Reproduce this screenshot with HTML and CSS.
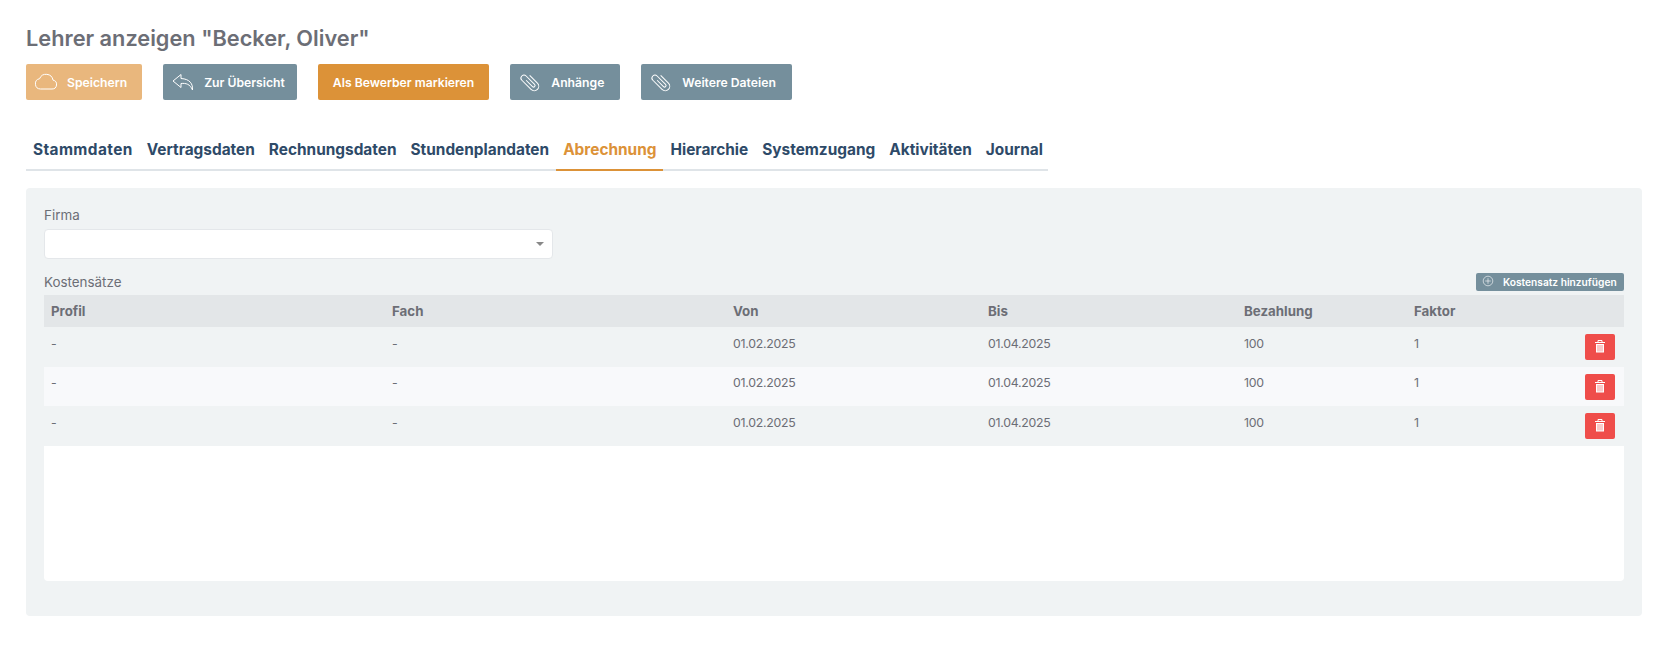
FILE: index.html
```html
<!DOCTYPE html>
<html lang="de">

<head>
    <meta charset="utf-8">
    <title>Lehrer anzeigen</title>
    <link rel="stylesheet" href="styles.css">
</head>

<body>
    <h1 class="page_title">Lehrer anzeigen "Becker, Oliver"</h1>

    <div class="actions">
        <button class="btn btn_light">
            <svg class="btn_icon" viewBox="0 0 24 24"><path d="M6.5 19h11.5a4.5 4.5 0 0 0 1-8.900 7 7 0 0 0-13.400-1.400 5.200 5.200 0 0 0 .9 10.300z" /></svg>
            Speichern
        </button>
        <button class="btn btn_slate btn_back">
            <svg class="btn_icon" viewBox="0 0 24 24"><path d="M10 4.500 2 11l8 6.500v-4c5-.5 9 .5 11.500 6.500.5-6-2.500-11-11.500-11.500z" /></svg>
            Zur Übersicht
        </button>
        <button class="btn btn_orange btn_text">Als Bewerber markieren</button>
        <button class="btn btn_slate">
            <svg class="btn_icon" viewBox="0 0 24 24"><path transform="rotate(-45 12 12)" d="M10.500 8v9a1.500 1.500 0 0 0 3 0V5a3 3 0 0 0-6 0v13a4.500 4.500 0 0 0 9 0V7" /></svg>
            Anhänge
        </button>
        <button class="btn btn_slate">
            <svg class="btn_icon" viewBox="0 0 24 24"><path transform="rotate(-45 12 12)" d="M10.500 8v9a1.500 1.500 0 0 0 3 0V5a3 3 0 0 0-6 0v13a4.500 4.500 0 0 0 9 0V7" /></svg>
            Weitere Dateien
        </button>
    </div>

    <ul class="tabs">
        <li>Stammdaten</li>
        <li>Vertragsdaten</li>
        <li>Rechnungsdaten</li>
        <li>Stundenplandaten</li>
        <li class="active">Abrechnung</li>
        <li>Hierarchie</li>
        <li>Systemzugang</li>
        <li>Aktivitäten</li>
        <li>Journal</li>
    </ul>

    <div class="panel">
        <label class="field_label">Firma</label>
        <div class="select"><span class="select_arrow"></span></div>

        <div class="table_head">
            <span class="field_label">Kostensätze</span>
            <button class="btn_add">
                <svg class="add_icon" viewBox="0 0 12 12"><circle cx="6" cy="6" r="4.800" /><path d="M6 3.200v5.600M3.200 6h5.600" /></svg>
                Kostensatz hinzufügen
            </button>
        </div>

        <div class="table_wrap">
            <table class="rates">
                <colgroup>
                    <col class="col_profil">
                    <col class="col_fach">
                    <col class="col_von">
                    <col class="col_bis">
                    <col class="col_pay">
                    <col>
                </colgroup>
                <thead>
                    <tr>
                        <th>Profil</th>
                        <th>Fach</th>
                        <th>Von</th>
                        <th>Bis</th>
                        <th>Bezahlung</th>
                        <th>Faktor</th>
                    </tr>
                </thead>
                <tbody>
                    <tr>
                        <td>-</td>
                        <td>-</td>
                        <td>01.02.2025</td>
                        <td>01.04.2025</td>
                        <td>100</td>
                        <td class="cell_last">1
                            <button class="btn_del"><svg viewBox="0 0 12 14"><path class="lid" d="M1 3.500h10M4 3.500V1.500h4v2" /><path class="bin" d="M2 5h8v8.500H2z" /><path class="slots" d="M4 6v6.500M6 6v6.500M8 6v6.500" /></svg></button>
                        </td>
                    </tr>
                    <tr>
                        <td>-</td>
                        <td>-</td>
                        <td>01.02.2025</td>
                        <td>01.04.2025</td>
                        <td>100</td>
                        <td class="cell_last">1
                            <button class="btn_del"><svg viewBox="0 0 12 14"><path class="lid" d="M1 3.500h10M4 3.500V1.500h4v2" /><path class="bin" d="M2 5h8v8.500H2z" /><path class="slots" d="M4 6v6.500M6 6v6.500M8 6v6.500" /></svg></button>
                        </td>
                    </tr>
                    <tr>
                        <td>-</td>
                        <td>-</td>
                        <td>01.02.2025</td>
                        <td>01.04.2025</td>
                        <td>100</td>
                        <td class="cell_last">1
                            <button class="btn_del"><svg viewBox="0 0 12 14"><path class="lid" d="M1 3.500h10M4 3.500V1.500h4v2" /><path class="bin" d="M2 5h8v8.500H2z" /><path class="slots" d="M4 6v6.500M6 6v6.500M8 6v6.500" /></svg></button>
                        </td>
                    </tr>
                </tbody>
            </table>
        </div>
    </div>
</body>

</html>
```

FILE: styles.css
```css
* {
    padding: 0;
    margin: 0;
    box-sizing: border-box;
}

body {
    background: #fff;
    color: #6c6e76;
    font-family: "Inter", "Liberation Sans", sans-serif;
    font-size: 13px;
    padding: 24px 24px 0 26px;
}

.page_title {
    font-size: 21.750px;
    font-weight: 600;
    line-height: 28px;
    color: #6c6e76;
}

.actions {
    display: flex;
    gap: 21px;
    margin-top: 12px;
}

.btn {
    display: flex;
    align-items: center;
    height: 36px;
    border: none;
    border-radius: 2px;
    color: #fff;
    font-family: inherit;
    font-size: 12.200px;
    font-weight: 600;
    padding: 0 16px 0 8px;
}

.btn_text {
    padding: 0 15px;
}

.btn_light {
    padding-right: 15px;
}

.btn_back {
    padding-right: 12px;
}

.btn_light {
    background: #e9b77d;
}

.btn_slate {
    background: #758f9c;
}

.btn_orange {
    background: #dc9238;
}

.btn_icon {
    width: 24px;
    height: 24px;
    margin-right: 9px;
    fill: none;
    stroke: #fff;
    stroke-width: 1;
}

.tabs {
    display: flex;
    width: 1022px;
    margin-top: 33px;
    list-style: none;
    border-bottom: 2px solid #dfe4e8;
}

.tabs li {
    padding: 0 7px;
    height: 38px;
    line-height: 33px;
    margin-bottom: -2px;
    font-size: 15.400px;
    font-weight: 700;
    color: #2e4a68;
}

.tabs li:first-child {
    letter-spacing: 0.400px;
}

.tabs li.active {
    color: #dc9238;
    border-bottom: 2px solid #dc9238;
}

.panel {
    margin-top: 17px;
    height: 428px;
    padding: 18px 18px 0;
    background: #f0f3f4;
    border-radius: 4px;
}

.field_label {
    display: block;
    font-size: 13.400px;
    line-height: 18px;
    color: #6c6e76;
}

.select {
    position: relative;
    width: 509px;
    height: 30px;
    margin-top: 5px;
    background: #fff;
    border: 1px solid #e4e7ea;
    border-radius: 4px;
}

.select_arrow {
    position: absolute;
    right: 8px;
    top: 12px;
    border-top: 4px solid #888;
    border-left: 4px solid transparent;
    border-right: 4px solid transparent;
}

.table_head {
    display: flex;
    justify-content: space-between;
    align-items: flex-start;
    margin-top: 14px;
    height: 22px;
}

.btn_add {
    display: flex;
    align-items: center;
    width: 148px;
    height: 18px;
    padding-left: 6px;
    border: none;
    border-radius: 2px;
    background: #758f9c;
    color: #fff;
    font-family: inherit;
    font-size: 10.200px;
    font-weight: 600;
}

.add_icon {
    width: 12px;
    height: 12px;
    margin: 0 9px 3px 0;
    fill: none;
    stroke: #fff;
    stroke-width: 0.600;
}

.table_wrap {
    height: 286px;
    background: #fff;
    border-radius: 0 0 4px 4px;
}

.rates {
    width: 100%;
    table-layout: fixed;
    border-collapse: collapse;
}

.col_profil {
    width: 341px;
}

.col_fach {
    width: 341px;
}

.col_von {
    width: 255px;
}

.col_bis {
    width: 256px;
}

.col_pay {
    width: 170px;
}

.rates th {
    height: 32px;
    padding: 0 7px;
    text-align: left;
    font-size: 13.300px;
    font-weight: 700;
    background: #e3e6e8;
}

.rates td {
    height: 39.500px;
    padding: 0 7px 7px;
    font-size: 12.300px;
    letter-spacing: -0.250px;
    background: #f0f3f4;
}

.rates tbody tr:nth-child(even) td {
    background: #f8f9fb;
}

.cell_last {
    position: relative;
}

.btn_del {
    position: absolute;
    right: 9px;
    top: 7px;
    display: flex;
    align-items: center;
    justify-content: center;
    width: 30px;
    height: 26px;
    border: none;
    border-radius: 2px;
    background: #ef4d4a;
}

.btn_del svg {
    width: 12px;
    height: 14px;
    margin-bottom: 2px;
}

.btn_del path {
    fill: none;
    stroke: #fff;
    stroke-width: 1;
}

.btn_del .bin {
    fill: #fff;
    stroke: none;
}

.btn_del .slots {
    stroke: #f28a88;
    stroke-width: 0.900;
}
```
